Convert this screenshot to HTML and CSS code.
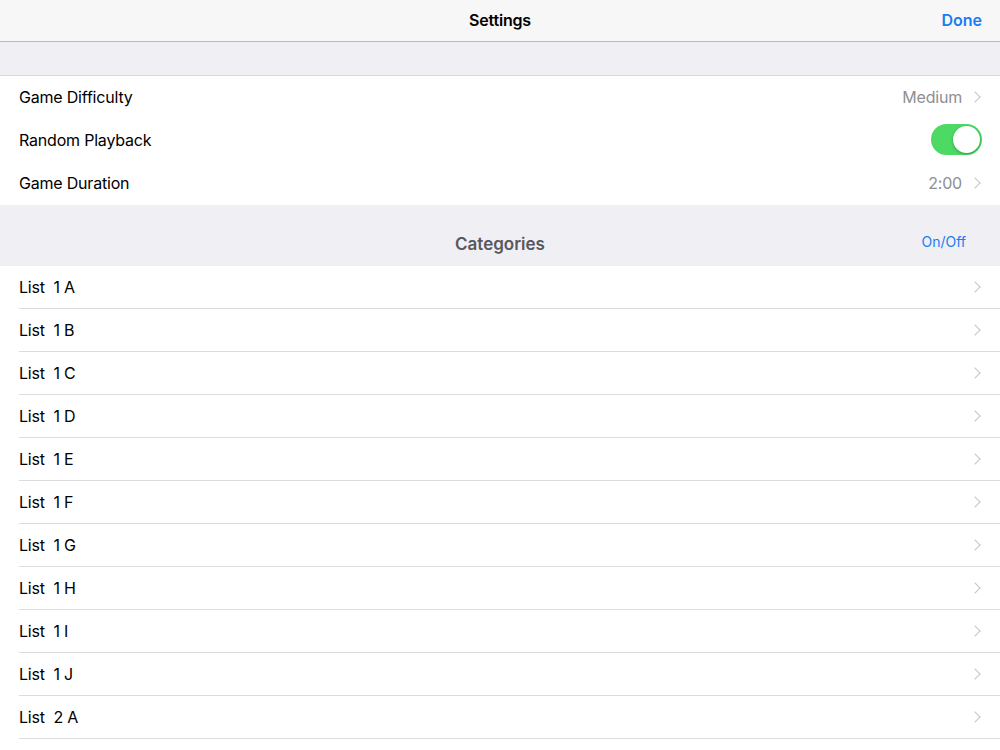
FILE: index.html
```html
<!DOCTYPE html>
<html lang="en">
<head>
    <meta charset="UTF-8">
    <title>Settings</title>
    <link rel="stylesheet" href="styles.css">
</head>
<body>
    <div class="navbar">
        <div class="nav-title">Settings</div>
        <div class="nav-done">Done</div>
    </div>

    <div class="spacer"></div>

    <div class="group">
        <div class="row">
            <span class="label">Game Difficulty</span>
            <span class="detail">Medium</span>
            <span class="chevron"></span>
        </div>
        <div class="row">
            <span class="label">Random Playback</span>
            <span class="toggle on"><span class="knob"></span></span>
        </div>
        <div class="row">
            <span class="label">Game Duration</span>
            <span class="detail">2:00</span>
            <span class="chevron"></span>
        </div>
    </div>

    <div class="section-header">
        <span class="section-title">Categories</span>
        <span class="section-action">On/Off</span>
    </div>

    <div class="group list">
        <div class="row"><span class="label">List&nbsp; 1 A</span><span class="chevron"></span></div>
        <div class="row"><span class="label">List&nbsp; 1 B</span><span class="chevron"></span></div>
        <div class="row"><span class="label">List&nbsp; 1 C</span><span class="chevron"></span></div>
        <div class="row"><span class="label">List&nbsp; 1 D</span><span class="chevron"></span></div>
        <div class="row"><span class="label">List&nbsp; 1 E</span><span class="chevron"></span></div>
        <div class="row"><span class="label">List&nbsp; 1 F</span><span class="chevron"></span></div>
        <div class="row"><span class="label">List&nbsp; 1 G</span><span class="chevron"></span></div>
        <div class="row"><span class="label">List&nbsp; 1 H</span><span class="chevron"></span></div>
        <div class="row"><span class="label">List&nbsp; 1 I</span><span class="chevron"></span></div>
        <div class="row"><span class="label">List&nbsp; 1 J</span><span class="chevron"></span></div>
        <div class="row"><span class="label">List&nbsp; 2 A</span><span class="chevron"></span></div>
    </div>
</body>
</html>
```

FILE: styles.css
```css
body {
    margin: 0;
    font-family: Inter, "Noto Sans", sans-serif;
    background-color: #efeff4;
    color: #000;
    overflow: hidden;
}

.navbar {
    height: 41px;
    background-color: #f7f7f8;
    border-bottom: 1px solid #b9b9bc;
    display: flex;
    align-items: center;
    justify-content: center;
    position: relative;
}

.nav-title {
    font-size: 16px;
    font-weight: 600;
    letter-spacing: -0.2px;
    margin-top: -2px;
}

.nav-done {
    position: absolute;
    right: 18px;
    top: 10px;
    color: #1a7cf2;
    font-size: 16px;
    font-weight: 600;
}

.spacer {
    height: 33px;
    border-bottom: 1px solid #d9d9dd;
}

.group {
    background-color: #fff;
}

.row {
    height: 43px;
    display: flex;
    align-items: center;
    padding: 0 18px 0 19px;
    font-size: 16px;
    letter-spacing: -0.2px;
}

.label {
    flex: 1;
    margin-top: -2px;
}

.detail {
    color: #8e8e93;
    margin-right: 9px;
    margin-top: -2px;
}

.chevron {
    width: 7px;
    height: 7px;
    border-right: 1.5px solid #c4c4c9;
    border-top: 1.5px solid #c4c4c9;
    transform: rotate(45deg);
    margin-right: 3px;
    margin-top: -2px;
}

.toggle {
    width: 51px;
    height: 31px;
    border-radius: 16px;
    background-color: #4cd964;
    position: relative;
    margin-top: -3px;
}

.toggle .knob {
    position: absolute;
    right: 2px;
    top: 2px;
    width: 27px;
    height: 27px;
    border-radius: 50%;
    background-color: #fff;
    box-shadow: 0 1px 3px rgba(0, 0, 0, 0.3);
}

.section-header {
    height: 61px;
    display: flex;
    align-items: center;
    justify-content: center;
    position: relative;
}

.section-title {
    font-size: 17px;
    font-weight: 600;
    color: #58585d;
    margin-top: 16px;
}

.section-action {
    position: absolute;
    right: 34px;
    top: 28px;
    font-size: 14px;
    color: #1a7cf2;
}

.list {
    min-height: 500px;
}

.list .row {
    position: relative;
}

.list .row::after {
    content: "";
    position: absolute;
    left: 19px;
    right: 0;
    bottom: 0;
    height: 1px;
    background-color: #dcdce0;
}
```
